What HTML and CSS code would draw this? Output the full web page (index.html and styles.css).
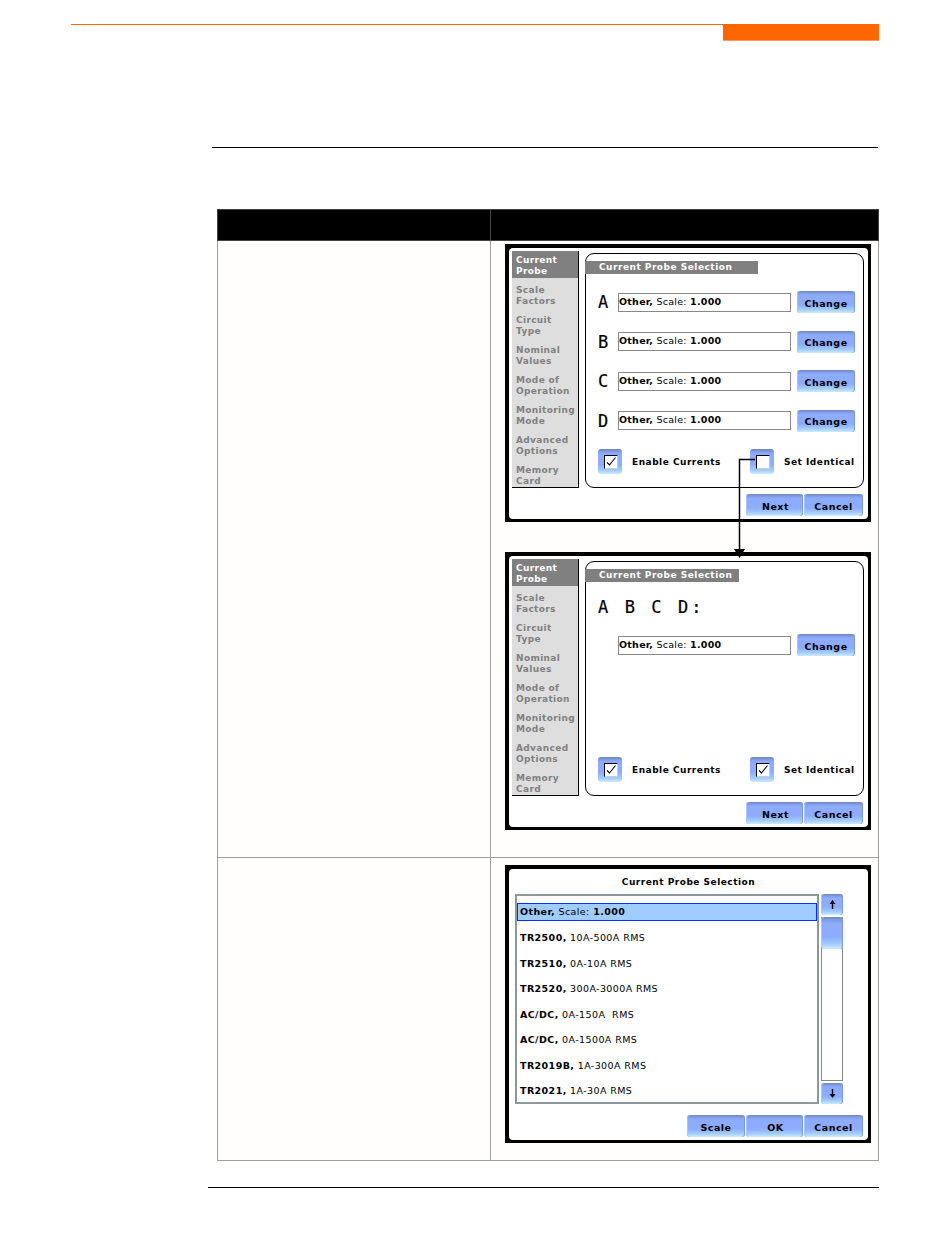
FILE: index.html
```html
<!DOCTYPE html>
<html>
<head>
    <title>Current Probe Selection</title>
    <link rel="stylesheet" href="styles.css">
</head>
<body>
    <div class="topbar">
        <div class="topbar__tab"></div>
    </div>
    <div class="rule rule--top"></div>

    <table class="steps">
        <tr class="steps__head">
            <th class="steps__left"></th>
            <th></th>
        </tr>
        <tr>
            <td></td>
            <td class="steps__shots">
                <div class="shots">
                    <div class="screen">
                        <div class="screen__inner">
                            <div class="screen__body">
                                <div class="menu">
                                    <div class="menu__item menu__item--on">Current<br>Probe</div>
                                    <div class="menu__item">Scale<br>Factors</div>
                                    <div class="menu__item">Circuit<br>Type</div>
                                    <div class="menu__item">Nominal<br>Values</div>
                                    <div class="menu__item">Mode of<br>Operation</div>
                                    <div class="menu__item">Monitoring<br>Mode</div>
                                    <div class="menu__item">Advanced<br>Options</div>
                                    <div class="menu__item">Memory<br>Card</div>
                                </div>
                                <div class="panel">
                                    <div class="panel__title">Current Probe Selection</div>
                                    <div class="probes">
                                        <div class="probe">
                                            <span class="probe__name">A</span>
                                            <div class="field"><b>Other,</b> Scale: <b>1.000</b></div>
                                            <div class="btn btn--change">Change</div>
                                        </div>
                                        <div class="probe">
                                            <span class="probe__name">B</span>
                                            <div class="field"><b>Other,</b> Scale: <b>1.000</b></div>
                                            <div class="btn btn--change">Change</div>
                                        </div>
                                        <div class="probe">
                                            <span class="probe__name">C</span>
                                            <div class="field"><b>Other,</b> Scale: <b>1.000</b></div>
                                            <div class="btn btn--change">Change</div>
                                        </div>
                                        <div class="probe">
                                            <span class="probe__name">D</span>
                                            <div class="field"><b>Other,</b> Scale: <b>1.000</b></div>
                                            <div class="btn btn--change">Change</div>
                                        </div>
                                    </div>
                                    <div class="options">
                                        <div class="option option--enable">
                                            <div class="check"><div class="check__box">
                                                <svg width="12" height="11" viewBox="0 0 12 11"><path d="M2 6.5l2.5 2.5 6-7.5" fill="none" stroke="#000" stroke-width="1.1"/></svg>
                                            </div></div>
                                            <span class="option__label">Enable Currents</span>
                                        </div>
                                        <div class="option">
                                            <div class="check"><div class="check__box"></div></div>
                                            <span class="option__label">Set Identical</span>
                                        </div>
                                    </div>
                                </div>
                            </div>
                            <div class="screen__foot">
                                <div class="btn btn--next">Next</div>
                                <div class="btn btn--cancel">Cancel</div>
                            </div>
                        </div>
                    </div>

                    <div class="screen">
                        <div class="screen__inner">
                            <div class="screen__body">
                                <div class="menu">
                                    <div class="menu__item menu__item--on">Current<br>Probe</div>
                                    <div class="menu__item">Scale<br>Factors</div>
                                    <div class="menu__item">Circuit<br>Type</div>
                                    <div class="menu__item">Nominal<br>Values</div>
                                    <div class="menu__item">Mode of<br>Operation</div>
                                    <div class="menu__item">Monitoring<br>Mode</div>
                                    <div class="menu__item">Advanced<br>Options</div>
                                    <div class="menu__item">Memory<br>Card</div>
                                </div>
                                <div class="panel">
                                    <div class="panel__title panel__title--short">Current Probe Selection</div>
                                    <div class="probes probes--same">
                                        <div class="probes__letters">A B C D:</div>
                                        <div class="probe">
                                            <span class="probe__name"></span>
                                            <div class="field"><b>Other,</b> Scale: <b>1.000</b></div>
                                            <div class="btn btn--change">Change</div>
                                        </div>
                                    </div>
                                    <div class="options">
                                        <div class="option option--enable">
                                            <div class="check"><div class="check__box">
                                                <svg width="12" height="11" viewBox="0 0 12 11"><path d="M2 6.5l2.5 2.5 6-7.5" fill="none" stroke="#000" stroke-width="1.1"/></svg>
                                            </div></div>
                                            <span class="option__label">Enable Currents</span>
                                        </div>
                                        <div class="option">
                                            <div class="check"><div class="check__box">
                                                <svg width="12" height="11" viewBox="0 0 12 11"><path d="M2 6.5l2.5 2.5 6-7.5" fill="none" stroke="#000" stroke-width="1.1"/></svg>
                                            </div></div>
                                            <span class="option__label">Set Identical</span>
                                        </div>
                                    </div>
                                </div>
                            </div>
                            <div class="screen__foot">
                                <div class="btn btn--next">Next</div>
                                <div class="btn btn--cancel">Cancel</div>
                            </div>
                        </div>
                    </div>

                    <!-- line from the Set Identical box down to the second screen -->
                    <svg class="connector" width="30" height="110" viewBox="0 0 30 110">
                        <path d="M22 1.5H6.5V92" fill="none" stroke="#000" stroke-width="1.5"/>
                        <path d="M1 91H12L6.5 100z" fill="#000"/>
                    </svg>
                </div>
            </td>
        </tr>
        <tr>
            <td></td>
            <td class="steps__shots steps__shots--list">
                <div class="screen">
                    <div class="screen__inner">
                        <div class="screen__title">Current Probe Selection</div>
                        <div class="picker">
                            <div class="list">
                                <div class="list__row list__row--on"><b>Other,</b> Scale: <b>1.000</b></div>
                                <div class="list__row"><b>TR2500,</b> 10A-500A RMS</div>
                                <div class="list__row"><b>TR2510,</b> 0A-10A RMS</div>
                                <div class="list__row"><b>TR2520,</b> 300A-3000A RMS</div>
                                <div class="list__row"><b>AC/DC,</b> 0A-150A&nbsp; RMS</div>
                                <div class="list__row"><b>AC/DC,</b> 0A-1500A RMS</div>
                                <div class="list__row"><b>TR2019B,</b> 1A-300A RMS</div>
                                <div class="list__row"><b>TR2021,</b> 1A-30A RMS</div>
                            </div>
                            <div class="scroll">
                                <div class="btn scroll__btn">
                                    <svg width="9" height="11" viewBox="0 0 9 11"><path d="M4.5 1L1.5 5H3.8V10H5.2V5H7.5z" fill="#000"/></svg>
                                </div>
                                <div class="scroll__track">
                                    <div class="btn scroll__thumb"></div>
                                </div>
                                <div class="btn scroll__btn">
                                    <svg width="9" height="11" viewBox="0 0 9 11"><path d="M4.5 10L1.5 6H3.8V1H5.2V6H7.5z" fill="#000"/></svg>
                                </div>
                            </div>
                        </div>
                        <div class="screen__foot screen__foot--list">
                            <div class="btn btn--scale">Scale</div>
                            <div class="btn btn--next">OK</div>
                            <div class="btn btn--cancel">Cancel</div>
                        </div>
                    </div>
                </div>
            </td>
        </tr>
    </table>

    <div class="rule rule--bottom"></div>
</body>
</html>
```

FILE: styles.css
```css
html, body {
    margin: 0;
    padding: 0;
    background: #fff;
    font-family: 'DejaVu Sans', sans-serif;
}

.topbar {
    margin: 24px 71px 0 71px;
    border-top: 1px solid #ff6600;
    height: 17px;
    display: flex;
    justify-content: flex-end;
}

.topbar__tab {
    width: 156px;
    height: 16px;
    background: #ff6600;
    border-bottom: 1px solid #ff9a5c;
    box-sizing: border-box;
}

.rule {
    background: #000;
    height: 1px;
}

.rule--top {
    margin: 105px 72px 0 212px;
}

.rule--bottom {
    margin: 26px 71px 0 208px;
}

.steps {
    margin: 61px 0 0 217px;
    width: 662px;
    border-collapse: collapse;
    table-layout: fixed;
    background: #fffefc;
}

.steps td,
.steps th {
    padding: 0;
    border: 1px solid #a0a0a0;
    vertical-align: top;
}

.steps__head th {
    height: 30px;
    background: #000;
    border-color: #444;
}

.steps__left {
    width: 272px;
}

.steps__shots {
    height: 616px;
}

.steps__shots--list {
    height: 302px;
}

.shots {
    position: relative;
    margin: 3px 0 0 14px;
    width: 366px;
}

.shots .screen + .screen {
    margin-top: 30px;
}

.steps__shots--list .screen {
    margin: 7px 0 0 14px;
}

.connector {
    position: absolute;
    left: 228px;
    top: 214px;
}

/* instrument screens */
.screen {
    box-sizing: border-box;
    width: 366px;
    height: 278px;
    padding: 4px 3px 3px 4px;
    background: #000;
}

.screen__inner {
    height: 100%;
    background: #fff;
    border-radius: 4px;
    display: flex;
    flex-direction: column;
}

.screen__body {
    display: flex;
    padding: 3px 0 0 3px;
}

.screen__foot {
    display: flex;
    justify-content: flex-end;
    gap: 1px;
    margin: 6px 5px 0 0;
}

.menu {
    box-sizing: border-box;
    width: 67px;
    height: 237px;
    background: #dedede;
    border-right: 1px solid #000;
    border-bottom: 1px solid #000;
    font-size: 9px;
    font-weight: 700;
    line-height: 11px;
    letter-spacing: 0.35px;
    color: #808080;
}

.menu__item {
    height: 22px;
    padding: 4px 0 1px 4px;
    margin-bottom: 3px;
    white-space: nowrap;
}

.menu__item--on {
    background: #808080;
    color: #fff;
}

.panel {
    box-sizing: border-box;
    width: 279px;
    height: 235px;
    margin: 2px 0 0 6px;
    border: 1px solid #000;
    border-radius: 9px;
    display: flex;
    flex-direction: column;
}

.panel__title {
    box-sizing: border-box;
    width: 173px;
    height: 13px;
    margin: 7px 0 0 -1px;
    padding-left: 14px;
    background: #808080;
    color: #fff;
    font-size: 9px;
    font-weight: 700;
    line-height: 13px;
    letter-spacing: 0.5px;
    white-space: nowrap;
}

.panel__title--short {
    width: 154px;
}

.probes {
    display: flex;
    flex-direction: column;
    gap: 17.67px;
    margin-top: 17px;
}

.probes--same {
    gap: 18px;
    margin-top: 0;
}

.probes__letters {
    height: 18px;
    margin-top: 16px;
    padding-left: 12px;
    font-family: 'DejaVu Sans Mono', monospace;
    font-size: 17px;
    line-height: 18px;
    letter-spacing: 3.1px;
    -webkit-text-stroke: 0.2px #000;
}

.probe {
    display: flex;
    align-items: center;
    height: 22px;
    padding-left: 12px;
}

.probe__name {
    width: 20px;
    font-family: 'DejaVu Sans Mono', monospace;
    font-size: 17px;
    -webkit-text-stroke: 0.2px #000;
}

.field {
    box-sizing: border-box;
    width: 173px;
    height: 19px;
    margin-right: 6px;
    border: 1px solid #888;
    font-size: 9.5px;
    line-height: 15px;
    letter-spacing: 0.25px;
    white-space: nowrap;
}

.options {
    display: flex;
    margin: auto 0 13px 12px;
}

.option {
    display: flex;
    align-items: center;
    gap: 10px;
}

.option--enable {
    width: 152px;
}

.option__label {
    font-size: 9px;
    font-weight: 700;
    letter-spacing: 0.5px;
    white-space: nowrap;
}

/* blue bevelled buttons */
.btn {
    box-sizing: border-box;
    display: flex;
    align-items: center;
    justify-content: center;
    border-radius: 3px;
    background: linear-gradient(#6f86b8 0, #7f9be0 9%, #8dabff 20%, #8dabff 62%, #a0ccff 84%, #cfeaff 100%);
    box-shadow: inset 1px 0 0 #a9c4ff, inset -1px 0 0 #7d9ad8;
    color: #000;
    font-size: 9.5px;
    font-weight: 700;
    letter-spacing: 0.5px;
}

.btn--change {
    width: 58px;
    height: 22px;
    padding-top: 2px;
}

.btn--next {
    width: 57px;
    height: 22px;
    padding: 2px 0 0 2px;
}

.btn--scale {
    width: 58px;
    height: 22px;
    padding-top: 2px;
}

.btn--cancel {
    width: 59px;
    height: 22px;
    padding-top: 2px;
}

.check {
    box-sizing: border-box;
    width: 24px;
    height: 25px;
    padding: 6px 0 0 6px;
    border-radius: 3px;
    background: linear-gradient(#6f86b8 0, #8dabff 18%, #8dabff 60%, #a0ccff 85%, #cfeaff 100%);
}

.check__box {
    box-sizing: border-box;
    width: 14px;
    height: 14px;
    background: #fff;
    border: 1px solid #000;
    border-right-color: #ccc;
    border-bottom-color: #ccc;
}

.check__box svg {
    display: block;
}

/* probe list screen */
.screen__title {
    margin-top: 6px;
    height: 15px;
    text-align: center;
    font-size: 9px;
    font-weight: 700;
    line-height: 15px;
    letter-spacing: 0.5px;
}

.picker {
    display: flex;
    gap: 2px;
    margin: 4px 0 0 6px;
}

.list {
    box-sizing: border-box;
    width: 304px;
    height: 210px;
    padding-top: 7px;
    border: 2px solid #8a9a9a;
    display: flex;
    flex-direction: column;
    gap: 7.43px;
}

.list__row {
    box-sizing: border-box;
    height: 18px;
    padding-left: 2px;
    border: 1px solid transparent;
    font-size: 9.5px;
    line-height: 17px;
    letter-spacing: 0.4px;
    white-space: nowrap;
}

.list__row--on {
    background: #a0ccff;
    border-color: #0033ff;
    line-height: 16px;
}

.scroll {
    display: flex;
    flex-direction: column;
    gap: 2px;
    width: 22px;
    height: 210px;
}

.scroll__btn {
    width: 22px;
    height: 21px;
}

.scroll__track {
    box-sizing: border-box;
    flex: 1;
    border: 1px solid #888;
    border-top: 0;
    background: #fff;
}

.scroll__thumb {
    width: 22px;
    height: 32px;
    margin-left: -1px;
}

.screen__foot--list {
    margin: 11px 5px 0 0;
}
```
